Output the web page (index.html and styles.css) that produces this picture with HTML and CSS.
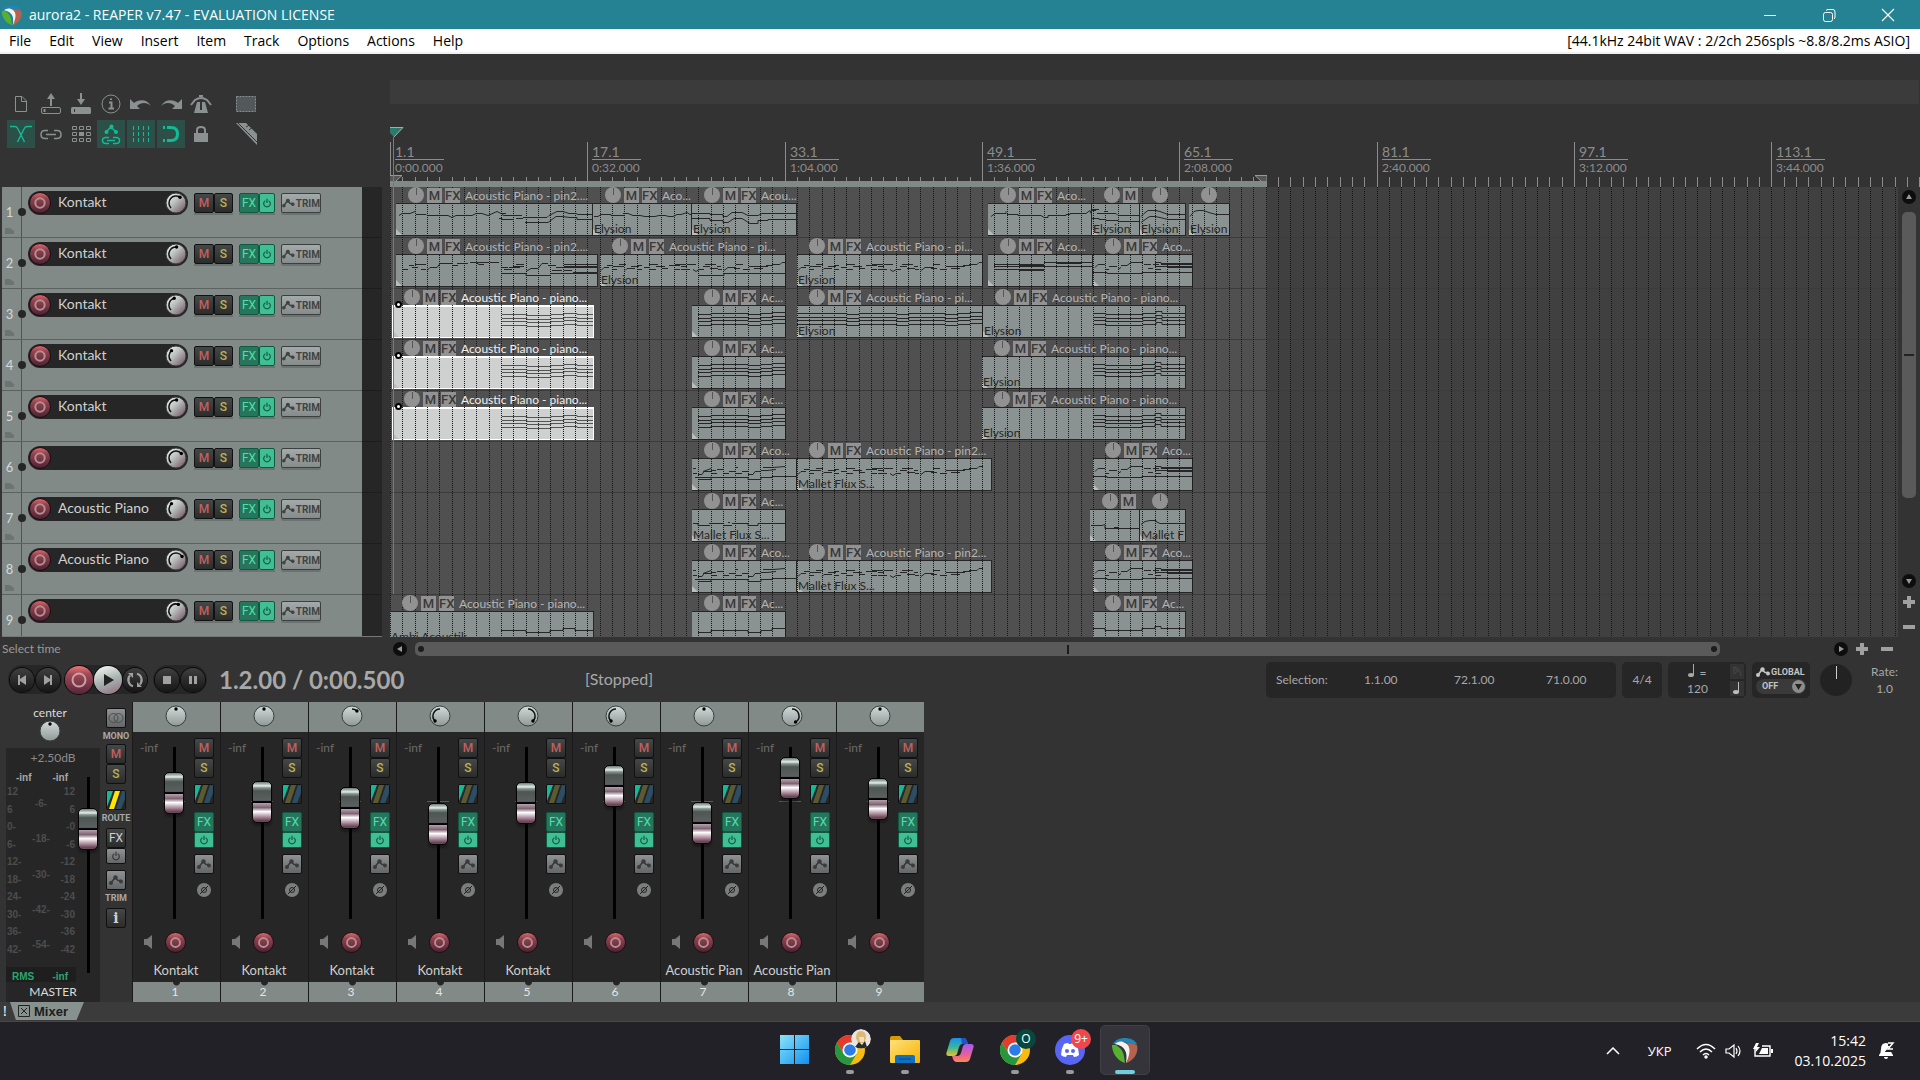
FILE: index.html
```html
<!DOCTYPE html>
<html lang="en">

<head>
     <meta charset="UTF-8">
     <meta name="viewport" content="width=device-width, initial-scale=1.0">
     <title>aurora2 - REAPER v7.47 - EVALUATION LICENSE</title>
     <link rel="stylesheet" href="styles.css">
</head>

<body>
     <!-- shared icons and gradients -->
     <svg class="defs" aria-hidden="true">
          <defs>
               <linearGradient id="metal" x1="0" y1="0" x2="1" y2="1">
                    <stop offset="0" stop-color="#fff" />
                    <stop offset=".45" stop-color="#b9bfbd" />
                    <stop offset="1" stop-color="#6b4a5a" />
               </linearGradient>
               <linearGradient id="steel" x1="0" y1="0" x2="0" y2="1">
                    <stop offset="0" stop-color="#d3dbdb" />
                    <stop offset="1" stop-color="#8f9997" />
               </linearGradient>
               <linearGradient id="rec" x1="0" y1="0" x2="0" y2="1">
                    <stop offset="0" stop-color="#e06a6f" />
                    <stop offset=".3" stop-color="#8f434f" />
                    <stop offset="1" stop-color="#4c2232" />
               </linearGradient>
               <linearGradient id="win" x1="0" y1="0" x2="1" y2="1">
                    <stop offset="0" stop-color="#8be3fb" />
                    <stop offset="1" stop-color="#0f92ee" />
               </linearGradient>
               <linearGradient id="folder" x1="0" y1="0" x2="1" y2="1">
                    <stop offset="0" stop-color="#ffe07a" />
                    <stop offset="1" stop-color="#f5b400" />
               </linearGradient>
               <linearGradient id="copa" x1="0" y1="0" x2="0" y2="1">
                    <stop offset="0" stop-color="#1a8fea" />
                    <stop offset=".5" stop-color="#35b6a0" />
                    <stop offset="1" stop-color="#e9c326" />
               </linearGradient>
               <linearGradient id="copb" x1="0" y1="0" x2="0" y2="1">
                    <stop offset="0" stop-color="#a15cf0" />
                    <stop offset=".6" stop-color="#e95f9c" />
                    <stop offset="1" stop-color="#fb8a4b" />
               </linearGradient>
          </defs>
          <symbol id="i-rec" viewBox="0 0 22 22">
               <circle cx="11" cy="11" r="10.500" fill="url(#rec)" stroke="#1a0d11" />
               <circle cx="11" cy="11" r="4.700" fill="none" stroke="#b58e93" stroke-width="2" />
          </symbol>
          <symbol id="i-power" viewBox="0 0 12 12">
               <path d="M4 3.200a4 4 0 1 0 4 0M6 1v5" fill="none" stroke="currentColor" stroke-width="1.500" />
          </symbol>
          <symbol id="i-env" viewBox="0 0 14 10">
               <path d="M2 8L6 2.500L9 5.500H12" fill="none" stroke="currentColor" stroke-width="1.600" />
               <circle cx="2" cy="8" r="2" fill="currentColor" />
               <circle cx="6.500" cy="2.500" r="2.200" fill="currentColor" />
               <circle cx="12" cy="6.500" r="2" fill="currentColor" />
          </symbol>
          <symbol id="i-route" viewBox="0 0 18 18">
               <rect width="18" height="18" fill="#262626" />
               <path d="M0 0H6L0 16z" fill="#14b995" />
               <path d="M8 0h5L7 18H2z" fill="var(--mid)" />
               <path d="M15 0h3v8L14 18H9z" fill="#2d4d63" />
          </symbol>
          <symbol id="i-reaper" viewBox="0 0 28 28">
               <path d="M2 8C6 0 22 0 26 8L20 10C16 5 10 6 7 8z" fill="#2484b8" />
               <path d="M1 9C1 16 5 24 14 27C13 19 13 14 5 9z" fill="#56b130" />
               <path d="M26 9C28 16 23 25 15 27C17 18 17 12 12 8C17 6 22 8 26 9z" fill="#b5624f" />
               <path d="M4 8C14 10 17 16 15 27C21 15 19 8 12 6C9 5 6 6 4 8z" fill="#f4f2ee" />
          </symbol>
          <symbol id="i-chrome" viewBox="0 0 30 30">
               <circle cx="15" cy="15" r="15" fill="#f9bb10" />
               <path d="M2 7.500A15 15 0 0 1 28 7.500H15L8.500 18.500z" fill="#e33b2e" />
               <path d="M2 7.500A15 15 0 0 0 15 30L21.500 19L8.500 18.500z" fill="#27973f" />
               <circle cx="15" cy="15" r="7.500" fill="#fff" />
               <circle cx="15" cy="15" r="5.800" fill="#2b7be9" />
          </symbol>
     </svg>

     <header class="titlebar">
          <svg width="22" height="24">
               <use href="#i-reaper" />
          </svg>
          <h1>aurora2 - REAPER v7.47 - EVALUATION LICENSE</h1>
          <div class="win-btns">
               <button aria-label="Minimize"><svg width="14" height="14"><path d="M1 7.500h12" stroke="#fff" /></svg></button>
               <button aria-label="Restore"><svg width="14" height="14" fill="none" stroke="#fff"><rect x="1.500" y="4.500" width="9" height="9" rx="2" /><path d="M4 2.500Q5 1.500 6 1.500H11Q13 1.500 13 4V9Q13 10 12 11" /></svg></button>
               <button aria-label="Close"><svg width="14" height="14"><path d="M1 1L13 13M13 1L1 13" stroke="#fff" stroke-width="1.200" /></svg></button>
          </div>
     </header>

     <nav class="menubar">
          <button>File</button>
          <button>Edit</button>
          <button>View</button>
          <button>Insert</button>
          <button>Item</button>
          <button>Track</button>
          <button>Options</button>
          <button>Actions</button>
          <button>Help</button>
          <span class="audio-info">[44.1kHz 24bit WAV : 2/2ch 256spls ~8.8/8.2ms ASIO]</span>
     </nav>

     <section class="top">
          <div class="toolbar">
               <button aria-label="New project"><svg viewBox="0 0 28 28"><path d="M8.500 6.500H15L19.500 11V21.500H8.500zM14.500 6.500V11.500H19.500" /></svg></button>
               <button aria-label="Open project"><svg viewBox="0 0 28 28"><rect x="4.500" y="17.500" width="19" height="6" rx="1.500" /><path d="M14 16V8M7.500 19V22" stroke-width="2" /><path class="solid" d="M14 3L18 9H10z" /></svg></button>
               <button aria-label="Save project"><svg viewBox="0 0 28 28"><rect class="solid" x="4" y="17" width="20" height="7" rx="1.500" /><path d="M14 3V10" stroke-width="2" /><path class="solid" d="M14 15L18 9H10z" /><path d="M7.500 19V22" stroke="#333" /></svg></button>
               <button aria-label="Project settings"><svg viewBox="0 0 28 28"><circle cx="14" cy="14" r="9" /><path d="M12 12.500H14.500V18.500M11.500 18.500H17M14 8.500V10" stroke-width="2" /></svg></button>
               <button aria-label="Undo"><svg viewBox="0 0 28 28"><path class="solid" d="M3 9V19H13L10 16C14 12 20 12 24 16C20 9 12 9 7 13z" /></svg></button>
               <button aria-label="Redo"><svg viewBox="0 0 28 28"><path class="solid" d="M25 9V19H15L18 16C14 12 8 12 4 16C8 9 16 9 21 13z" /></svg></button>
               <button aria-label="Metronome"><svg viewBox="0 0 28 28"><path class="solid" d="M10 12H18L21 23H7zM12 5H16V7H12z" /><path d="M4 15L8 10Q14 6 20 10L24 15" stroke-width="2" /><path d="M14 12V20" stroke="#333" stroke-width="2" /></svg></button>
               <button class="far" aria-label="Marquee"><svg viewBox="0 0 28 28"><rect x="4.500" y="6.500" width="19" height="15" fill="#53595a" stroke-dasharray="2 1" /></svg></button>

               <button class="on" aria-label="Auto-crossfade"><svg viewBox="0 0 28 28"><path d="M3 6.500H8Q10 6.500 11 9L17.500 22M25 6.500H20Q18 6.500 17 9L10.500 22" stroke-width="1.500" /></svg></button>
               <button aria-label="Item grouping"><svg viewBox="0 0 28 28"><path d="M11 10.500H8Q4 10.500 4 14.500T8 18.500H11M17 10.500H20Q24 10.500 24 14.500T20 18.500H17M9 14.500H19" stroke-width="1.500" /></svg></button>
               <button aria-label="Ripple editing"><svg viewBox="0 0 28 28"><path d="M5.500 6.500h4v3h-4zM12.500 6.500h4v3h-4zM19.500 6.500h4v3h-4zM5.500 12.500h4v3h-4zM19.500 12.500h4v3h-4zM5.500 18.500h4v3h-4zM12.500 18.500h4v3h-4zM19.500 18.500h4v3h-4z" /><path class="solid" d="M12 12h5v4h-5z" /></svg></button>
               <button class="on" aria-label="Move envelopes with items"><svg viewBox="0 0 28 28"><path d="M9 12L14 7L19 12M12 17.500H9Q5.500 17.500 5.500 20.500T9 23.500H12M16 17.500H19Q22.500 17.500 22.500 20.500T19 23.500H16M10 20.500H18" stroke-width="1.500" /><circle class="solid" cx="9.500" cy="12" r="2" /><circle class="solid" cx="14.500" cy="6.500" r="2" /><circle class="solid" cx="19" cy="12" r="2" /></svg></button>
               <button class="on" aria-label="Grid lines"><svg viewBox="0 0 28 28"><path d="M6.500 6V23M11.500 6V23M16.500 6V23M21.500 6V23" stroke-dasharray="4 2" /></svg></button>
               <button class="on" aria-label="Snapping"><svg viewBox="0 0 28 28"><path d="M10 7.500H14Q20.500 7.500 20.500 14T14 20.500H10M6 7.500H8M6 20.500H8" stroke-width="3" /></svg></button>
               <button aria-label="Locking"><svg viewBox="0 0 28 28"><rect class="solid" x="7" y="13" width="14" height="9" /><path d="M10 13V10Q10 7 14 7T18 10V13" stroke-width="2" /></svg></button>
               <button class="far" aria-label="Dock toolbar"><svg viewBox="0 0 28 28"><path class="solid" d="M4 3H14L25 14V25z" /><path d="M6 3L25 22M14 7L19 4M17 10L22 6" stroke="#333" /></svg></button>
          </div>
          <div class="ruler-side">
               <div class="region-bar"></div>
               <div class="ruler" id="ruler">
                    <div class="loop-bar"></div>
                    <svg class="loop-start" width="12" height="6"><path d="M0 0H12L6 6H0z" fill="#565656" /><path d="M0 .500H12L6 6" fill="none" stroke="#999" /></svg>
                    <svg class="loop-end" width="12" height="6"><path d="M0 0H12V6H6z" fill="#565656" /><path d="M6 6L0 .500H12V6" fill="none" stroke="#999" /></svg>
                    <svg class="cursor-head" width="14" height="60"><path d="M0 .500H13L4 10L0 6z" fill="#2c7a6d" /><path d="M0 .500H13L4 10" fill="none" stroke="#a3adab" /><path d="M3.500 10V60" stroke="#379a87" /></svg>
               </div>
          </div>
     </section>

     <main class="arrange">
          <div class="tcp" id="tcp"></div>
          <div class="timeline" id="timeline">
               <svg class="grid" id="grid" aria-hidden="true"></svg>
               <div class="play-cursor"></div>
          </div>
          <div class="vscroll">
               <button class="dot-btn" aria-label="Scroll up"><svg viewBox="0 0 14 14"><path d="M7 4L10 9H4z" /></svg></button>
               <div class="vtrack"><div class="vthumb"></div></div>
               <button class="dot-btn" aria-label="Scroll down"><svg viewBox="0 0 14 14"><path d="M7 10L10 5H4z" /></svg></button>
               <button class="zoom plus" aria-label="Zoom in vertically"></button>
               <button class="zoom" aria-label="Zoom out vertically"></button>
          </div>
     </main>

     <section class="status">
          <span class="hint">Select time</span>
          <div class="hscroll">
               <button class="dot-btn" aria-label="Scroll left"><svg viewBox="0 0 14 14"><path d="M4 7L9 4V10z" /></svg></button>
               <div class="htrack"><div class="hthumb"><i></i><b></b><i></i></div></div>
               <button class="dot-btn" aria-label="Scroll right"><svg viewBox="0 0 14 14"><path d="M10 7L5 4V10z" /></svg></button>
               <button class="zoom plus" aria-label="Zoom in"></button>
               <button class="zoom" aria-label="Zoom out"></button>
          </div>
     </section>

     <section class="transport">
          <div class="btn-group">
               <button class="round" aria-label="Go to start"><svg viewBox="0 0 24 24"><path d="M8 7h2v4l6-4v10l-6-4v4H8z" /></svg></button>
               <button class="round" aria-label="Go to end"><svg viewBox="0 0 24 24"><path d="M16 7h-2v4L8 7v10l6-4v4h2z" /></svg></button>
          </div>
          <div class="btn-group tight">
               <button class="round big red" aria-label="Record"><svg viewBox="0 0 28 28"><circle cx="14" cy="14" r="6.500" /></svg></button>
               <button class="round big play" aria-label="Play"><svg viewBox="0 0 28 28"><path d="M10 8L20 14L10 20z" /></svg></button>
               <button class="round" aria-label="Repeat"><svg viewBox="0 0 24 24"><path class="line" d="M7 7.500A6.500 6.500 0 0 0 10 18.200M17 16.500A6.500 6.500 0 0 0 14 5.800M7 16.500A6.500 6.500 0 0 1 6 10M17 7.500A6.500 6.500 0 0 1 18 14" /><path d="M5 5h5v5zM19 19h-5v-5z" /></svg></button>
          </div>
          <div class="btn-group">
               <button class="round" aria-label="Stop"><svg viewBox="0 0 24 24"><path d="M8 8h8v8H8z" /></svg></button>
               <button class="round" aria-label="Pause"><svg viewBox="0 0 24 24"><path d="M8 8h3v8H8zM13 8h3v8h-3z" /></svg></button>
          </div>
          <div class="time">1.2.00 / 0:00.500</div>
          <div class="state">[Stopped]</div>
          <div class="panel selection">
               <span>Selection:</span>
               <span>1.1.00</span>
               <span>72.1.00</span>
               <span>71.0.00</span>
          </div>
          <div class="panel sig">4/4</div>
          <div class="panel tempo">
               <div class="bpm">
                    <span><svg width="8" height="13"><ellipse cx="3" cy="11" rx="3" ry="2" fill="#a8a8a8" /><path d="M5.500 0V11" stroke="#a8a8a8" /></svg> =</span>
                    <span>120</span>
               </div>
               <div class="tempo-btns">
                    <button aria-label="Tempo map"><svg width="12" height="12"><path d="M3 2V9L7 6L4 4M2 2Q9 2 10 11" fill="none" stroke="#484848" /></svg></button>
                    <button aria-label="Beat"><svg width="8" height="12"><ellipse cx="3" cy="10" rx="3" ry="2" fill="#bbb" /><path d="M5.500 0V10" stroke="#bbb" /></svg></button>
               </div>
          </div>
          <div class="panel global">
               <div class="global-top"><svg width="14" height="10"><use href="#i-env" /></svg>GLOBAL</div>
               <button class="off">OFF <svg width="13" height="13"><circle cx="6.500" cy="6.500" r="6.500" fill="#8c8c8c" /><path d="M3 4H10L6.500 10z" fill="#222" /></svg></button>
          </div>
          <div class="rate-knob"></div>
          <div class="rate"><span>Rate:</span><span>1.0</span></div>
     </section>

     <section class="mixer">
          <div class="master">
               <div class="master-left">
                    <span class="center-label">center</span>
                    <div id="masterKnob" class="master-knob"></div>
                    <div class="master-box">
                         <div class="meters">
                              <div class="db">+2.50dB</div>
                              <div class="infs"><span>-inf</span><span>-inf</span></div>
                              <div class="scales">
                                   <div class="scale"><span>12</span><span>6</span><span>0-</span><span>6-</span><span>12-</span><span>18-</span><span>24-</span><span>30-</span><span>36-</span><span>42-</span></div>
                                   <div class="scale mid"><span>-6-</span><span>-18-</span><span>-30-</span><span>-42-</span><span>-54-</span></div>
                                   <div class="scale right"><span>12</span><span>6</span><span>-0</span><span>-6</span><span>-12</span><span>-18</span><span>-24</span><span>-30</span><span>-36</span><span>-42</span></div>
                              </div>
                              <div class="rms"><span>RMS</span><span>-inf</span></div>
                         </div>
                         <input class="fader master-fader" type="range" min="0" max="154" value="123" aria-label="Master volume">
                         <div class="master-name">MASTER</div>
                    </div>
               </div>
               <div class="master-btns">
                    <button class="sq light" aria-label="Mono"><svg width="16" height="12" fill="none" stroke="#4c4c4c"><circle cx="5.500" cy="6" r="4.500" /><circle cx="10.500" cy="6" r="4.500" /></svg></button>
                    <span class="tiny">MONO</span>
                    <button class="sq mute">M</button>
                    <button class="sq solo">S</button>
                    <button class="sq route bright" aria-label="Route"><svg width="18" height="18"><use href="#i-route" /></svg></button>
                    <span class="tiny">ROUTE</span>
                    <button class="sq fxoff">FX</button>
                    <button class="sq light short" aria-label="FX bypass"><svg width="10" height="10"><use href="#i-power" /></svg></button>
                    <button class="sq light env" aria-label="Trim"><svg width="14" height="10"><use href="#i-env" /></svg></button>
                    <span class="tiny">TRIM</span>
                    <button class="sq info">i</button>
               </div>
          </div>
          <div class="strips" id="strips"></div>
     </section>

     <section class="docker">
          <span class="bang">!</span>
          <button class="tab"><svg width="12" height="12" fill="none" stroke="#222"><path d="M.500 .500h11v11H.500zM3 3L9 9M9 3L3 9" /></svg>Mixer</button>
     </section>

     <footer class="taskbar">
          <div class="apps">
               <button aria-label="Start"><svg width="30" height="30"><path d="M0 0h14v14H0zM15 0h14v14H15zM0 15h14v14H0zM15 15h14v14H15z" fill="url(#win)" /></svg></button>
               <button class="open" aria-label="Chrome"><svg width="30" height="30"><use href="#i-chrome" /></svg>
                    <svg class="badge" width="20" height="20"><circle cx="10" cy="10" r="10" fill="#e9e4dd" /><path d="M5 9Q5 2 10 2T15 9L13 14H7z" fill="#dcb877" /><path d="M8 8h5v5H9z" fill="#f4dcc8" /><path d="M4 18L8 13L11 16L14 12L16 18Q10 21 4 18z" fill="#2b2b2b" /></svg></button>
               <button class="open" aria-label="File Explorer"><svg width="30" height="28"><path d="M0 2Q0 0 2 0H10L13 4H28V12H0z" fill="#d99a00" /><rect y="4" width="30" height="23" rx="1" fill="url(#folder)" /><path d="M5 27V21Q5 19 7 19H23Q25 19 25 21V27z" fill="#0f6fc0" /><path d="M9 23H21" stroke="#0a4a87" /></svg></button>
               <button aria-label="Copilot"><svg width="28" height="26"><path d="M8 1H18Q20 1 21 4L22 7H16Q14 7 13 10L11 17Q10 19 8 19H3Q-1 19 1 14L4 4Q5 1 8 1z" fill="url(#copa)" /><path d="M20 25H10Q8 25 7 22L6 19H12Q14 19 15 16L17 9Q18 7 20 7H25Q29 7 27 12L24 22Q23 25 20 25z" fill="url(#copb)" /><path d="M15 1H18Q20 1 21 4L22 7H16z" fill="#2152c8" /></svg></button>
               <button class="open" aria-label="Chrome, profile O"><svg width="30" height="30"><use href="#i-chrome" /></svg><span class="badge profile">O</span></button>
               <button class="open" aria-label="Discord"><svg width="30" height="30"><circle cx="15" cy="15" r="15" fill="#5865f2" /><path d="M9 9Q11 8 13 8L14 9H16L17 8Q19 8 21 9Q24 14 24 20Q22 22 19 22L18 20H12L11 22Q8 22 6 20Q6 14 9 9z" fill="#fff" /><circle cx="12" cy="16" r="2" fill="#5865f2" /><circle cx="18" cy="16" r="2" fill="#5865f2" /></svg><span class="badge count">9+</span></button>
               <button class="open active" aria-label="REAPER"><svg width="28" height="28"><use href="#i-reaper" /></svg></button>
          </div>
          <div class="tray">
               <svg width="14" height="8"><path d="M1 7L7 1L13 7" fill="none" stroke="#fff" stroke-width="1.500" /></svg>
               <span class="lang">УКР</span>
               <svg width="20" height="16" fill="none" stroke="#fff" stroke-width="1.500"><path d="M1 6Q10 -3 19 6M4 9Q10 3 16 9M7 12Q10 9 13 12" /><circle cx="10" cy="14" r="1" fill="#fff" /></svg>
               <svg width="18" height="16" fill="none" stroke="#fff" stroke-width="1.200"><path d="M1 6H4L9 2V14L4 10H1z" /><path d="M11 5Q13 8 11 11M13 3Q17 8 13 13" /></svg>
               <svg class="battery" width="22" height="16"><path d="M3 5V13H18V3H10" fill="none" stroke="#fff" stroke-width="1.400" /><path d="M10 5H16V11H7z" fill="#fff" /><path d="M19 6H21V10H19z" fill="#fff" /><path d="M4 0L1 6H4L3 10L8 4H5L7 0z" fill="#fff" /></svg>
               <div class="clock"><span>15:42</span><span>03.10.2025</span></div>
               <svg width="18" height="20"><path d="M2 14Q4 12 4 8Q4 2 9 2T14 8Q14 12 16 14V15H2zM7 16H11Q11 18 9 18T7 16z" fill="#fff" /><path d="M11 3H17L12 9H17" fill="none" stroke="#232228" stroke-width="4" /><path d="M11 2H16L11 8H16" fill="none" stroke="#fff" stroke-width="1.500" /></svg>
          </div>
     </footer>

     <script src="script.js"></script>
</body>

</html>
```

FILE: styles.css
```css
* {
     padding: 0;
     margin: 0;
     box-sizing: border-box;
}

:root {
     --bg: #333;
     --dark: #262626;
     --track: #828a88;
     --teal: #14b995;
     --ui: Lato, 'Open Sans', sans-serif;
     --win: 'Open Sans', 'Noto Sans', sans-serif;
     --narrow: 'Liberation Sans Narrow', Roboto, sans-serif;
}

body {
     height: 100vh;
     display: flex;
     flex-direction: column;
     overflow: hidden;
     background: var(--bg);
     color: #a8a8a8;
     font-family: var(--ui);
     font-size: 14px;
     user-select: none;
}

button {
     border: none;
     background: none;
     color: inherit;
     font: inherit;
     display: flex;
     align-items: center;
     justify-content: center;
}

.defs {
     position: absolute;
     width: 0;
     height: 0;
}

/* window chrome */
.titlebar {
     flex: none;
     height: 29px;
     padding-left: 1px;
     display: flex;
     align-items: center;
     gap: 6px;
     background: #258292;
     color: #fff;
     font-family: var(--win);
}

.titlebar h1 {
     flex: 1;
     font-size: 14px;
     font-weight: 400;
}

.win-btns {
     display: flex;
}

.win-btns button {
     width: 59px;
     height: 29px;
}

.win-btns button:last-child {
     width: 62px;
     padding-right: 2px;
}

.menubar {
     flex: none;
     height: 25px;
     padding: 0 10px 0 9px;
     display: flex;
     align-items: center;
     gap: 18px;
     background: #fff;
     border-bottom: 2px solid #f0f0f0;
     color: #000;
     font-family: var(--win);
     font-size: 14px;
}

.audio-info {
     margin-left: auto;
}

/* toolbar and ruler */
.top {
     flex: none;
     display: grid;
     grid-template-columns: 390px 1fr;
     height: 133px;
}

.toolbar {
     padding: 36px 0 0 7px;
     display: grid;
     grid-template-columns: repeat(7, 28px) 43px;
     grid-auto-rows: 28px;
     gap: 2px;
     color: #8a9190;
}

.toolbar svg {
     width: 28px;
     height: 28px;
     fill: none;
     stroke: currentColor;
}

.toolbar .solid {
     fill: currentColor;
     stroke: none;
}

.toolbar .far {
     justify-content: flex-end;
}

.toolbar .on {
     background: #2c4f48;
     color: var(--teal);
}

.ruler-side {
     display: flex;
     flex-direction: column;
     padding-top: 26px;
     overflow: hidden;
}

.region-bar {
     height: 24px;
     margin-right: 1px;
     background: #3b3b3b;
}

.ruler {
     flex: 1;
     position: relative;
     overflow: hidden;
}

.mark {
     position: absolute;
     top: 38px;
     height: 45px;
     padding-left: 4px;
     border-left: 1px solid #8c8c8c;
     color: #8c8c8c;
}

.mark b {
     display: block;
     width: 49px;
     height: 18px;
     line-height: 20px;
     border-bottom: 1px solid #8c8c8c;
     font-size: 14px;
     font-weight: 400;
}

.mark span {
     display: block;
     line-height: 16px;
     font-size: 12px;
}

.tick {
     position: absolute;
     bottom: 0;
     width: 1px;
     height: 10px;
     background: #8c8c8c;
}

.loop-bar {
     position: absolute;
     left: 0;
     bottom: 0;
     width: 877px;
     height: 6px;
     z-index: 1;
     background: var(--track);
}

.loop-start,
.loop-end {
     position: absolute;
     bottom: 6px;
     left: 0;
}

.loop-end {
     left: 865px;
}

.cursor-head {
     position: absolute;
     top: 23px;
     left: 0;
     z-index: 2;
}

/* track list */
.arrange {
     flex: 1;
     min-height: 0;
     display: grid;
     grid-template-columns: 390px 1fr 22px;
}

.tcp {
     overflow: hidden;
     margin: 0 8px 0 2px;
     background: var(--dark);
     border-bottom: 1px solid #777;
}

.track {
     height: 51px;
     display: flex;
     border-bottom: 1px solid #1d1d1d;
}

.track-main {
     width: 360px;
     height: 51px;
     display: flex;
     background: var(--track);
     border-bottom: 1px solid #5b6260;
}

.track-num {
     width: 20px;
     padding-top: 15px;
     border-right: 1px solid #4f5554;
     color: #d5d9d8;
     font-size: 13px;
     line-height: 20px;
     display: flex;
     flex-direction: column;
     align-items: center;
     gap: 6px;
     padding-right: 4px;
}

.track-num svg {
     flex: none;
}

.spine {
     width: 8px;
     height: 8px;
     margin: 21px 2px 0 -4px;
     border-radius: 50%;
     background: var(--dark);
}

.track-ctl {
     display: flex;
     align-items: flex-start;
     padding-top: 6px;
     gap: 6px;
}

.pill {
     width: 160px;
     height: 24px;
     margin-top: -2px;
     padding: 0 1px;
     display: flex;
     align-items: center;
     gap: 7px;
     border-radius: 12px;
     background: var(--dark);
     color: #d0d0d0;
     font-size: 14px;
}

.pill span {
     flex: 1;
     line-height: 22px;
     padding-bottom: 2px;
}

.pair {
     display: flex;
     box-shadow: 0 2px 0 #6b7371;
}

.sq {
     width: 20px;
     height: 20px;
     border: 1px solid #111;
     border-radius: 2px;
     background: linear-gradient(#454848, #2b2d2d);
     color: #d0d0d0;
     font-family: Roboto, sans-serif;
     font-size: 12px;
     font-weight: 400;
}

.mute {
     color: #c4605f;
     font-weight: 500;
}

.solo {
     color: #bfb04f;
     font-weight: 500;
}

.pair .solo {
     width: 19px;
}

.fx {
     background: #26755c;
     border-color: #0d5a41;
     color: #4fe0a8;
}

.pwr {
     width: 16px;
     background: #41bf94;
     border-color: #0d5a41;
     color: #14604a;
}

.trim {
     width: 40px;
     height: 20px;
     gap: 1px;
     border: 1px solid #3c3f3f;
     border-radius: 2px;
     background: linear-gradient(#a4aaa9, #868c8b);
     box-shadow: 0 2px 0 #6b7371;
     color: #3f4443;
     font: 700 10px var(--narrow);
}

/* timeline */
.timeline {
     position: relative;
     overflow: hidden;
     background: #404040;
}

.lane {
     position: relative;
     height: 51px;
     border-bottom: 1px solid #3b3b3b;
     background: linear-gradient(90deg, #505050 877px, transparent 0);
}

.grid {
     position: absolute;
     inset: 0;
     width: 100%;
     height: 100%;
     z-index: 1;
     pointer-events: none;
}

.play-cursor {
     position: absolute;
     left: 3px;
     top: 0;
     width: 1px;
     height: 407px;
     z-index: 3;
     background: #379a87;
}

.clip {
     position: absolute;
     top: 0;
     height: 49px;
}

.clip-head {
     position: relative;
     z-index: 2;
     height: 16px;
     padding-left: 12px;
     display: flex;
     align-items: center;
     gap: 3px;
     color: #b4b4b4;
     font-size: 12px;
     white-space: nowrap;
}

.clip-head i {
     flex: none;
     width: 15px;
     height: 15px;
     background: #929292;
     color: #3a3a3a;
     font: 500 13px/15px Roboto, sans-serif;
     text-align: center;
}

.clip-head .vol {
     width: 16px;
     height: 16px;
     border-radius: 50%;
     background: linear-gradient(#555, #555) center 1px / 1px 7px no-repeat #929292;
}

.clip-head span {
     padding: 2px 0 0 2px;
     line-height: 18px;
}

.clip-body {
     position: relative;
     height: 33px;
     overflow: hidden;
     background: #8a9391;
     border: solid #262626;
     border-width: 1px 1px 1px 0;
     color: #262626;
     font-size: 12px;
     line-height: 12px;
     display: flex;
     align-items: flex-end;
     padding-left: 1px;
     white-space: nowrap;
}

.clip-body::before {
     content: '';
     position: absolute;
     left: 0;
     bottom: 0;
     border: solid transparent;
     border-width: 6px 0 0 6px;
     border-left-color: #b9bfbd;
     border-top-color: transparent;
}

.clip-body svg {
     position: absolute;
     left: 0;
     top: 0;
     fill: none;
     stroke: #262626;
}

.clip-body span {
     position: relative;
     z-index: 2;
}

.clip.selected .clip-head {
     color: #f0f0f0;
}

.clip.selected .clip-body {
     background: #ced1d0;
     border: 1px solid #fff;
     border-top-width: 2px;
}

.clip.selected .clip-body svg {
     stroke: #555;
}

.clip.selected::before {
     content: '';
     position: absolute;
     left: 3px;
     top: 12px;
     width: 3px;
     height: 3px;
     z-index: 4;
     border: 2px solid #000;
     border-radius: 50%;
     background: #fff;
}

/* scrollbars */
.dot-btn {
     flex: none;
     width: 14px;
     height: 14px;
     border-radius: 50%;
     background: #0d0d0d;
}

.dot-btn svg {
     width: 14px;
     fill: #999;
}

.zoom {
     flex: none;
     width: 12px;
     height: 12px;
     background: linear-gradient(#a0a0a0, #a0a0a0) center / 12px 4px no-repeat;
}

.zoom.plus {
     background: linear-gradient(#a0a0a0, #a0a0a0) center / 12px 4px no-repeat, linear-gradient(#a0a0a0, #a0a0a0) center / 4px 12px no-repeat;
}

.vscroll {
     display: flex;
     flex-direction: column;
     align-items: center;
     padding: 3px 1px 4px 0;
     gap: 13px;
}

.vtrack {
     flex: 1;
     width: 14px;
     margin: -5px 0;
     padding-bottom: 63px;
}

.vtrack + .dot-btn {
     margin: 5px 0 -5px;
}

.vthumb {
     height: 100%;
     border-radius: 5px;
     background: linear-gradient(#222, #222) center / 10px 2px no-repeat #5a5a5a;
}

.status {
     flex: none;
     height: 20px;
     display: grid;
     grid-template-columns: 390px 1fr;
     align-items: center;
}

.hint {
     padding: 2px 0 0 2px;
     font-size: 12px;
     color: #999;
     line-height: 20px;
}

.hscroll {
     display: flex;
     align-items: center;
     gap: 13px;
     padding: 2px 27px 0 3px;
}

.htrack {
     flex: 1;
     margin-left: -5px;
     padding-right: 101px;
}

.htrack + .dot-btn {
     margin: 0 -5px 0 0;
}

.hthumb {
     height: 14px;
     padding: 0 3px;
     display: flex;
     align-items: center;
     justify-content: space-between;
     border-radius: 5px;
     background: #5a5a5a;
}

.hthumb i {
     width: 6px;
     height: 6px;
     border-radius: 50%;
     background: #1c1c1c;
}

.hthumb b {
     width: 2px;
     height: 9px;
     background: #1c1c1c;
}

/* transport */
.transport {
     flex: none;
     height: 45px;
     padding: 4px 22px 4px 8px;
     display: flex;
     align-items: center;
     gap: 6px;
}

.btn-group {
     display: flex;
     align-items: center;
     gap: 2px;
     height: 29px;
     padding: 0 2px;
     border-radius: 15px;
     background: #262626;
}

.btn-group.tight {
     gap: 1px;
     padding: 0;
     margin-left: -3px;
}

.round {
     width: 24px;
     height: 24px;
     border-radius: 50%;
     background: linear-gradient(#3f3f3f, #161616);
     box-shadow: 0 0 0 1px #0c0c0c;
}

.round svg {
     width: 100%;
     fill: #a0a0a0;
}

.round .line {
     fill: none;
     stroke: #a0a0a0;
     stroke-width: 2px;
}

.round.big {
     width: 28px;
     height: 28px;
}

.round.red {
     background: linear-gradient(#ee7478, #9f4956 30%, #552638);
}

.round.red svg {
     fill: none;
     stroke: #c9a1a5;
     stroke-width: 2px;
}

.round.play {
     background: linear-gradient(160deg, #fff, #a9b4b1 50%, #8f6c7f);
}

.round.play svg {
     fill: #222;
}

.time {
     margin-left: 6px;
     width: 360px;
     font-size: 24px;
     font-weight: 700;
     line-height: 32px;
}

.state {
     flex: 1;
     font-size: 16px;
     line-height: 32px;
     padding-bottom: 2px;
}

.panel {
     height: 36px;
     border-radius: 5px;
     background: var(--dark);
     font-size: 12px;
}

.selection {
     width: 350px;
     padding-left: 10px;
     display: grid;
     grid-template-columns: 88px 90px 92px 1fr;
     align-items: center;
}

.sig {
     width: 40px;
     display: flex;
     align-items: center;
     justify-content: center;
}

.tempo {
     width: 78px;
     display: flex;
     justify-content: space-between;
     padding: 2px 2px 2px 19px;
}

.bpm {
     display: flex;
     flex-direction: column;
     align-items: center;
     line-height: 16px;
}

.tempo-btns {
     display: flex;
     flex-direction: column;
     gap: 2px;
}

.tempo-btns button {
     width: 14px;
     height: 15px;
     background: #333;
}

.global {
     width: 58px;
     padding: 3px 4px;
     color: #c4c4c4;
     font: 700 9px var(--narrow);
}

.global-top {
     display: flex;
     align-items: center;
     gap: 1px;
     height: 14px;
}

.global svg {
     flex: none;
}

.off {
     width: 50px;
     height: 15px;
     padding: 0 1px 0 6px;
     justify-content: space-between;
     border-radius: 8px;
     background: #3a3a3a;
}

.rate-knob {
     width: 32px;
     height: 32px;
     margin: 0 13px 0 4px;
     border-radius: 50%;
     background: linear-gradient(#ccc, #ccc) center 2px / 1px 13px no-repeat #222;
}

.rate {
     display: flex;
     flex-direction: column;
     align-items: center;
     font-size: 12px;
     line-height: 17px;
}

/* mixer */
.mixer {
     flex: none;
     height: 300px;
     display: flex;
}

.master {
     width: 132px;
     padding-left: 6px;
     display: flex;
}

.master-left {
     width: 94px;
     display: flex;
     flex-direction: column;
}

.center-label {
     height: 18px;
     padding: 3px 6px 0 0;
     line-height: 16px;
     text-align: center;
     color: #dcdcdc;
     font-size: 12px;
}

.master-knob {
     height: 28px;
     padding-right: 6px;
     text-align: center;
}

.master-box {
     flex: 1;
     display: grid;
     grid-template-columns: 70px 24px;
     grid-template-rows: 1fr 20px;
     background: var(--dark);
}

.meters {
     display: flex;
     flex-direction: column;
}

.db {
     padding: 2px 0 0 24px;
     text-align: center;
     line-height: 16px;
     font-size: 12px;
     color: #8c8c8c;
}

.infs,
.rms {
     display: flex;
     justify-content: space-between;
     font: 700 10px/16px 'Liberation Sans', sans-serif;
     padding: 0 8px 0 6px;
}

.infs {
     padding: 4px 8px 0 10px;
}

.scales {
     flex: 1;
     display: flex;
     justify-content: space-between;
     color: #4d4d4d;
     font: 700 10px/12px 'Liberation Sans', sans-serif;
     padding: 0 1px 11px;
}

.scale {
     display: flex;
     flex-direction: column;
     justify-content: space-between;
}

.scale.mid {
     padding: 12px 0 5px;
     text-align: center;
}

.scale.right {
     text-align: right;
}

.rms {
     background: #1e1e1e;
     height: 15px;
     line-height: 20px;
     color: #2ba671;
}

.master-name {
     grid-column: 1 / 3;
     text-align: center;
     line-height: 20px;
     font-size: 12px;
     color: #dcdcdc;
}

.master-btns {
     width: 32px;
     padding-top: 6px;
     display: flex;
     flex-direction: column;
     align-items: center;
}

.tiny {
     height: 16px;
     font: 700 9px/16px var(--narrow);
     color: #a8a8a8;
}

.light {
     background: linear-gradient(#8f9292, #646767);
     color: #3b3b3b;
}

.short {
     height: 16px;
}

.route {
     --mid: #5c5a33;
     margin-top: 6px;
     overflow: hidden;
}

.route.bright {
     --mid: #ffe500;
}

.route + .tiny {
     height: 18px;
}

.env {
     margin-top: 6px;
}

.info {
     margin-top: 2px;
     font: 700 14px 'DejaVu Serif', serif;
}

.strips {
     display: flex;
}

.strip {
     width: 88px;
     display: flex;
     flex-direction: column;
     background: var(--dark);
     border-left: 1px solid #1a1a1a;
}

.strip-top {
     height: 30px;
     padding: 3px 2px 0 0;
     text-align: center;
     background: var(--track);
}

.strip-mid {
     height: 190px;
     display: grid;
     grid-template-columns: 30px 1fr 26px;
     padding-top: 6px;
}

.strip-mid > span {
     padding: 2px 0 0 7px;
     line-height: 16px;
     font-size: 12px;
     color: #6a6a6a;
}

.strip-fader {
     padding-top: 9px;
     background: linear-gradient(#5a5a5a, #5a5a5a) 0 63px / 22px 1px no-repeat;
}

.fader {
     appearance: none;
     writing-mode: vertical-lr;
     direction: rtl;
     display: block;
     width: 22px;
     height: 172px;
     background: linear-gradient(#000, #000) center / 3px 100% no-repeat;
}

.master-fader {
     height: 196px;
     margin: 29px 0 0 1px;
}

.fader::-webkit-slider-thumb {
     appearance: none;
     width: 20px;
     height: 42px;
     border: 1px solid #050505;
     border-radius: 5px;
     background: linear-gradient(#6a7a74, #e6efec 10%, #8d9794 14%, #4c5752 22%, #5d5f60 46%, #000 49%, #000 52%, #b39fab 53%, #7d6470 64%, #fff 74%, #cbb5c0 82%, #6c4659 96%);
     box-shadow: 0 3px 2px rgba(0, 0, 0, .3);
}

.strip-btns {
     display: flex;
     flex-direction: column;
}

.strip-btns .fx {
     margin-top: 8px;
}

.strip-btns .pwr {
     width: 20px;
     height: 16px;
}

.phase {
     width: 14px;
     height: 14px;
     margin: 9px 0 0 3px;
     border-radius: 50%;
     background: #7c7e7e;
     color: #222;
}

.strip-rec {
     height: 40px;
     display: flex;
     align-items: center;
     gap: 12px;
     padding-left: 11px;
}

.strip-name {
     height: 20px;
     padding-right: 1px;
     text-align: center;
     line-height: 16px;
     font-size: 13px;
     color: #d0d0d0;
}

.strip-num {
     height: 20px;
     padding-right: 3px;
     line-height: 20px;
     text-align: center;
     background: radial-gradient(circle at center top, var(--dark) 3px, transparent 4px) var(--track);
     color: #e2e6e5;
     font-size: 12px;
}

.docker {
     flex: none;
     height: 19px;
     display: flex;
     background: #3b3b3b;
     color: #fff;
     line-height: 18px;
     font-family: var(--win);
}

.bang {
     width: 10px;
     padding-left: 3px;
}

.tab {
     height: 18px;
     padding: 0 16px 0 8px;
     gap: 4px;
     background: #87928f;
     clip-path: polygon(0 0, 100% 0, 90% 100%, 8% 100%);
     color: #1c1c1c;
     font: 700 13px 'Liberation Sans', sans-serif;
}

/* taskbar */
.taskbar {
     flex: none;
     height: 59px;
     display: grid;
     grid-template-columns: 1fr auto 1fr;
     background: #222127;
     border-top: 1px solid #47474a;
     color: #fff;
     font-family: var(--win);
}

.apps {
     grid-column: 2;
     display: flex;
     gap: 5px;
     padding-top: 3px;
}

.apps button {
     position: relative;
     width: 50px;
     height: 50px;
     border-radius: 5px;
}

.apps .open::after {
     content: '';
     position: absolute;
     bottom: 1px;
     left: 21px;
     width: 8px;
     height: 4px;
     border-radius: 2px;
     background: #9a9a9a;
}

.apps .active {
     background: #35343a;
     border: 1px solid #414046;
}

.apps .active::after {
     left: 14px;
     width: 20px;
     bottom: 0;
     background: #6fcfdc;
}

.badge {
     position: absolute;
     top: 4px;
     right: 4px;
     width: 20px;
     height: 20px;
     border-radius: 50%;
     font-size: 12px;
     line-height: 20px;
}

.profile {
     background: #06483e;
}

.count {
     background: #f0474d;
}

.tray {
     display: flex;
     align-items: center;
     justify-content: flex-end;
     padding-right: 25px;
     font-size: 13px;
}

.tray svg {
     margin-right: 9px;
}

.tray > svg:first-child {
     margin-right: 28px;
}

.lang {
     margin-right: 24px;
}

.tray .battery {
     margin-right: 21px;
}

.clock {
     display: flex;
     flex-direction: column;
     align-items: flex-end;
     margin-right: 11px;
     font-size: 14px;
     line-height: 20px;
}

.tray > svg:last-child {
     margin-right: 0;
}
```

FILE: script.js
```js
const BAR = 37 / 3; // pixels per bar at this zoom

// vol: angle of the volume knob, pan: angle of the mixer pan knob, fader: slider value
const tracks = [
     { name: "Kontakt", vol: 35, pan: 0, fader: 105 },
     { name: "Kontakt", vol: 5, pan: 0, fader: 96 },
     { name: "Kontakt", vol: -15, pan: 45, fader: 90 },
     { name: "Kontakt", vol: -40, pan: -135, fader: 74 },
     { name: "Kontakt", vol: 5, pan: 135, fader: 95 },
     { name: "", vol: 50, pan: -135, fader: 112 },
     { name: "Acoustic Piano", vol: -40, pan: 0, fader: 75 },
     { name: "Acoustic Piano", vol: 60, pan: 150, fader: 120 },
     { name: "", vol: 20, pan: 0, fader: 99 }
];

// four voices that move together: [from, to, shift]
function chords(segments) {
     return [7, 11, 14, 18].map(y => {
          return segments.map(([from, to, shift], i) => `${i ? "V" + (y + shift) : `M${from} ${y + shift}`}H${to}`).join("");
     }).join("");
}

const arp = "M1 15L4 12H9M7 10H13M13 14H17M13 11H24M19 9H26M25 15L27 13H35M31 11H39M37 10H42M38 14H42M44 12H50M49 9H58M50 14H56M56 11H65M62 13H68M69 10H80M75 9H86M74 14H80M81 11H87M81 14H90M87 9H96M93 14L96 16M96 16L99 14H104M103 11H110M105 9H116M110 13H118M117 11H121M118 14H122M124 15L128 12H136M134 13H140M136 9H143M143 14H150M149 11H160M154 13H163M160 11H168M166 10H173M172 9H180L182 7H186";
const arpShort = "M1 9H4M1 14H5M6 15H10L12 12H20M11 12L19 9M19 14H25M19 11H24M25 10H31M31 14H37M37 12H43M43 8H46M43 14H50M50 12H56M56 15H61L63 12H68M69 11H75M71 8H80M75 11L84 10M81 8L93 7M3 18H19M6 20H19V18H56V20H69V18H80V17H105";
const arpEnd = "M2 12L5 9H12M12 14H16M16 11H24M25 14L28 12M28 10H34L38 7H50M51 9H58M55 13H60M60 9H66M62 7H68V8H99M68 9H99M62 11H74M74 11H99M74 12H99M62 14H68M0 17H14V18H49V17H99";
const chordA = chords([[109, 134, 0], [134, 158, 1], [158, 171, 0], [171, 184, -1], [184, 202, 0]]);
const chordB = chords([[6, 19, 1], [19, 56, 0], [56, 69, 1], [69, 80, 0], [80, 93, -1]]);
const chordC = chords([[0, 50, 0], [50, 62, 1], [62, 100, 0], [100, 112, 1], [112, 148, 0], [148, 161, 1], [161, 173, 0], [173, 186, -1]]);
const chordD = chords([[111, 123, 0], [123, 160, 1], [160, 173, 0], [173, 179, -2], [179, 203, 0]]);

const piano = "Acoustic Piano - piano...";
const pin = "Acoustic Piano - pin2...";

// [start, width, title, preset, notes, selected]; no title leaves room for fewer buttons
const clips = [
     [
          [6, 197, "Acoustic Piano - pin2....", "", "M3 11L6 9H14L19 7M20 10H30L31 11H52L56 13L60 11H76L80 9H86L92 11L101 7L105 9H110M106 10L108 11H126M127 13H151L153 11L161 7H167L173 9H180L182 10H197M103 14H106V15H118M120 14H127M129 18H152L160 12H166L174 13H181V15H197"],
          [203, 99, "Aco...", "Elysion", "M1 12H5L8 10H18V11H31M30 9H35L40 11H47L52 12H62L66 11H72L76 12H80L84 10H88L94 8L97 10H99"],
          [302, 105, "Acou...", "Elysion", "M0 9H18V10H31V12H35L40 8H50L56 11H66L70 9H105M0 14H18V16H31V18H36L42 14H50L58 19H66V16H76V15H105"],
          [598, 104, "Aco...", "", "M3 12L7 9H18V7M19 10H30V11H53L56 13H60V11H78V10H82V9H98L102 6L103 9"],
          [702, 48, "M", "Elysion", "M0 5H7M0 6H4M5 9H13M12 7H16M14 9H24L26 11H48M0 14H7V15H14V16H26V17H48"],
          [750, 46, "", "Elysion", "M1 12L4 9L8 6H16L20 7L28 10H46M1 18L8 13L10 12H15L20 13L28 15H46"],
          [799, 41, "", "Elysion", "M1 12L5 7L9 6H14L20 8L27 10H40"]
     ],
     [
          [6, 202, "Acoustic Piano - pin2....", "", "M7 14H12M13 10H18M16 12H22M19 9H30M25 14H30M31 15L34 12H41L44 8H56M57 10H62M61 8H72M74 7H80L83 9H88M81 7H93M94 7H103M105 12H112M108 14H116M106 18H130V20H155M155 18H202M113 12H124M117 11H128M120 9H128M130 16L135 13H142L146 8H152M152 10H160M156 15H166M160 12H168M168 9H202M168 11H202M168 12H202M168 15H176M177 17H202"],
          [210, 186, "Acoustic Piano - pi...", "Elysion", arp + "M98 20H124V18H186"],
          [407, 186, "Acoustic Piano - pi...", "Elysion", arp],
          [598, 105, "Aco...", "", "M6 9H31M6 11H105M6 14H56M31 9H56M31 10H56M31 15H56M56 7H105M69 8H94"],
          [703, 100, "Aco...", "", arpEnd]
     ],
     [
          [2, 202, piano, "", chordA, true],
          [302, 94, "Ac...", "", chordB],
          [407, 186, "Acoustic Piano - pi...", "Elysion", chordC],
          [593, 203, piano, "Elysion", chordD]
     ],
     [
          [2, 202, piano, "", chordA, true],
          [302, 94, "Ac...", "", chordB],
          [592, 204, piano, "Elysion", chordD]
     ],
     [
          [2, 202, piano, "", chordA, true],
          [302, 94, "Ac...", "", chordB],
          [592, 204, piano, "Elysion", chordD]
     ],
     [
          [302, 105, "Aco...", "", arpShort],
          [407, 195, pin, "Mallet Flux S...", arp],
          [703, 100, "Aco...", "", arpEnd]
     ],
     [
          [302, 94, "Ac...", "Mallet Flux S...", "M1 13H6V15H18M17 13H31M32 15H40M36 12H38M40 13H56V15H66V13H93"],
          [700, 50, "M", "", "M1 15H12L15 14M15 15V18H49M24 17H28"],
          [750, 46, "", "Mallet F", "M1 14L5 11L10 10H16V11L20 13H46"]
     ],
     [
          [302, 105, "Aco...", "", arpShort],
          [407, 195, pin, "Mallet Flux S...", arp],
          [703, 100, "Aco...", "", arpEnd]
     ],
     [
          [0, 204, piano, "Ambi Acoustik", "M111 18H136V20H160V18H173V16H185V18H203"],
          [302, 94, "Ac...", "", "M6 20H19V18H56V20H69V18H80V16H93"],
          [703, 93, "Ac...", "", "M0 16H12V18H49V16H62V14H68V16H92"]
     ]
];

const icon = (id, w, h) => `<svg width="${w}" height="${h}"><use href="#i-${id}"/></svg>`;

// Round knob with an arc drawn from one angle to another, 0 is straight up
function knob(size, from, to, fill) {
     const c = size / 2;
     const r = c - 4;
     const point = deg => {
          const a = (deg - 90) * Math.PI / 180;
          return [c + r * Math.cos(a), c + r * Math.sin(a)];
     };
     const [x1, y1] = point(from);
     const [x2, y2] = point(to);
     const large = Math.abs(to - from) > 180 ? 1 : 0;
     const sweep = to > from ? 1 : 0;
     return `<svg width="${size}" height="${size}">
          <circle cx="${c}" cy="${c}" r="${c - 1}" fill="url(#${fill})" stroke="#3a3f3e"/>
          <path d="M${x1} ${y1}A${r} ${r} 0 ${large} ${sweep} ${x2} ${y2}" fill="none" stroke="#111" stroke-width="1.500"/>
          <circle cx="${x2}" cy="${y2}" r="1.700" fill="#000"/>
     </svg>`;
}

function renderTracks() {
     document.querySelector("#tcp").innerHTML = tracks.map((t, i) => `
          <div class="track">
               <div class="track-main">
                    <div class="track-num">${i + 1}
                         <svg width="9" height="6"><path d="M0 0H5L9 3V6H0z" fill="#6c7472"/></svg>
                    </div>
                    <div class="spine"></div>
                    <div class="track-ctl">
                         <div class="pill">
                              <button aria-label="Record arm">${icon("rec", 22, 22)}</button>
                              <span>${t.name}</span>
                              ${knob(22, -135, t.vol, "metal")}
                         </div>
                         <div class="pair"><button class="sq mute">M</button><button class="sq solo">S</button></div>
                         <div class="pair"><button class="sq fx">FX</button><button class="sq pwr" aria-label="Bypass">${icon("power", 10, 10)}</button></div>
                         <button class="trim">${icon("env", 13, 10)}TRIM</button>
                    </div>
               </div>
          </div>`).join("");
}

function renderClip([start, width, title, preset, notes, selected]) {
     let head = `<i class="vol"></i>`;
     if (title) head += `<i>M</i>`;
     if (title && title !== "M") head += `<i>FX</i><span>${title}</span>`;
     return `
          <div class="clip${selected ? " selected" : ""}" style="left:${start}px;width:${width}px">
               <div class="clip-head">${head}</div>
               <div class="clip-body">
                    <svg width="${width}" height="31"><path d="${notes}" transform="translate(0 .5)"/></svg>
                    <span>${preset}</span>
               </div>
          </div>`;
}

function renderTimeline() {
     const lanes = clips.map(row => `<div class="lane">${row.map(renderClip).join("")}</div>`).join("");
     document.querySelector("#timeline").insertAdjacentHTML("afterbegin", lanes);

     let lines = "";
     let ticks = "";
     const total = Math.ceil(document.querySelector("#ruler").clientWidth / BAR);
     for (let i = 0; i < total; i++) {
          const x = Math.round(i * BAR);
          lines += `M${x + 0.5} 0V2000`;
          if (i % 16 === 0) {
               const secs = i * 2;
               const time = `${Math.floor(secs / 60)}:${String(secs % 60).padStart(2, "0")}.000`;
               ticks += `<div class="mark" style="left:${x}px"><b>${i + 1}.1</b><span>${time}</span></div>`;
          } else {
               ticks += `<div class="tick" style="left:${x}px"></div>`;
          }
     }
     document.querySelector("#grid").innerHTML = `<path d="${lines}" stroke="#161616" stroke-dasharray="1 1"/>`;
     document.querySelector("#ruler").insertAdjacentHTML("afterbegin", ticks);
}

function renderMixer() {
     document.querySelector("#masterKnob").innerHTML = knob(22, 0, 0, "steel");
     document.querySelector("#strips").innerHTML = tracks.map((t, i) => `
          <div class="strip">
               <div class="strip-top">${knob(22, 0, t.pan, "steel")}</div>
               <div class="strip-mid">
                    <span>-inf</span>
                    <div class="strip-fader"><input class="fader" type="range" min="0" max="130" value="${t.fader}" aria-label="Volume ${i + 1}"></div>
                    <div class="strip-btns">
                         <button class="sq mute">M</button>
                         <button class="sq solo">S</button>
                         <button class="sq route" aria-label="Route">${icon("route", 18, 18)}</button>
                         <button class="sq fx">FX</button>
                         <button class="sq pwr" aria-label="Bypass">${icon("power", 10, 10)}</button>
                         <button class="sq light env" aria-label="Envelopes">${icon("env", 14, 10)}</button>
                         <button class="phase" aria-label="Phase"><svg width="10" height="10"><circle cx="5" cy="5" r="2.500" fill="none" stroke="#222"/><path d="M1 9L9 1" stroke="#222"/></svg></button>
                    </div>
               </div>
               <div class="strip-rec">
                    <svg width="9" height="14"><path d="M0 4H3L8 0V14L3 10H0z" fill="#777"/></svg>
                    <button aria-label="Record arm">${icon("rec", 21, 21)}</button>
               </div>
               <div class="strip-name">${t.name.slice(0, 13)}</div>
               <div class="strip-num">${i + 1}</div>
          </div>`).join("");
}

renderTracks();
renderTimeline();
renderMixer();
```
